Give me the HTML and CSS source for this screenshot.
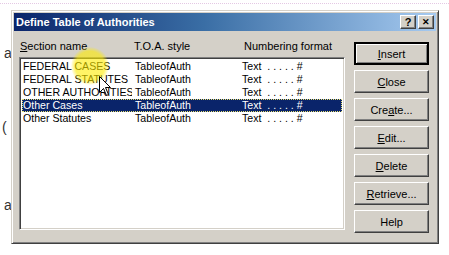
FILE: index.html
```html
<!DOCTYPE html>
<html lang="en">
<head>
    <meta charset="UTF-8">
    <title>Define Table of Authorities</title>
    <link rel="stylesheet" href="styles.css">
</head>
<body>
    <div class="doc-rule"></div>
    <div class="desk">
        <div class="doc-margin">
            <span class="stray first">a</span>
            <span class="stray second">(</span>
            <span class="stray third">a</span>
        </div>
        <div class="dialog">
            <div class="titlebar">
                <span class="title">Define Table of Authorities</span>
                <div class="caption-btns">
                    <span class="cap-btn">?</span>
                    <span class="cap-btn close">&#x2715;</span>
                </div>
            </div>
            <div class="content">
                <div class="list-col">
                    <div class="headers">
                        <span><u>S</u>ection name</span>
                        <span>T.O.A. style</span>
                        <span class="h-num">Numbering format</span>
                    </div>
                    <div class="listbox">
                        <div class="row"><span class="name">FEDERAL CASES</span><span>TableofAuth</span><span class="fmt">Text  . . . . . #</span></div>
                        <div class="row"><span class="name">FEDERAL STATUTES</span><span>TableofAuth</span><span class="fmt">Text  . . . . . #</span></div>
                        <div class="row"><span class="name">OTHER AUTHORITIES</span><span>TableofAuth</span><span class="fmt">Text  . . . . . #</span></div>
                        <div class="row selected"><span class="name">Other Cases</span><span>TableofAuth</span><span class="fmt">Text  . . . . . #</span></div>
                        <div class="row"><span class="name">Other Statutes</span><span>TableofAuth</span><span class="fmt">Text  . . . . . #</span></div>
                    </div>
                </div>
                <div class="btn-col">
                    <button class="default"><u>I</u>nsert</button>
                    <button><u>C</u>lose</button>
                    <button>Cre<u>a</u>te...</button>
                    <button><u>E</u>dit...</button>
                    <button><u>D</u>elete</button>
                    <button><u>R</u>etrieve...</button>
                    <button>Help</button>
                </div>
            </div>
        </div>
    </div>

    <!-- mouse highlight and pointer over the dialog -->
    <div class="spotlight"></div>
    <svg class="pointer" width="13" height="21" viewBox="0 0 13 21">
        <path d="M0.5,0.5 L0.5,16.5 L4.5,12.5 L7.5,19.5 L9.5,18.5 L6.5,11.5 L11.5,11.5 Z" fill="#fff" stroke="#000" stroke-width="1"/>
    </svg>
</body>
</html>
```

FILE: styles.css
```css
body {
    margin: 0;
    background-color: #fff;
    font-family: "Liberation Sans", Arial, sans-serif;
    font-size: 11px;
    color: #000;
    position: relative;
    width: 449px;
    height: 255px;
    overflow: hidden;
}
.doc-rule {
    margin-top: 3px;
    height: 0;
    border-top: 1px dotted #e4c8e4;
}
.desk {
    display: flex;
    margin-top: 6px;
}
.doc-margin {
    width: 11px;
    display: flex;
    flex-direction: column;
    font-size: 14px;
    line-height: 14px;
    color: #333;
}
.stray {
    padding-left: 4px;
}
.stray.first {
    margin-top: 36px;
}
.stray.second {
    margin-top: 60px;
    padding-left: 2px;
}
.stray.third {
    margin-top: 64px;
}
.dialog {
    width: 428px;
    height: 234px;
    box-sizing: border-box;
    background-color: #d4d0c8;
    border: 1px solid;
    border-color: #d4d0c8 #404040 #404040 #d4d0c8;
    box-shadow: inset 1px 1px #fff, inset -1px -1px #808080;
    padding: 2px;
    display: flex;
    flex-direction: column;
}
.titlebar {
    height: 18px;
    background: linear-gradient(to right, #0a246a, #3a6ea5 45%, #a6caf0);
    display: flex;
    align-items: center;
    justify-content: space-between;
    padding-left: 2px;
}
.title {
    color: #fff;
    font-weight: bold;
    font-size: 11px;
}
.caption-btns {
    display: flex;
    gap: 2px;
    margin-right: 2px;
}
.cap-btn {
    width: 16px;
    height: 14px;
    box-sizing: border-box;
    background-color: #d4d0c8;
    border: 1px solid;
    border-color: #fff #404040 #404040 #fff;
    box-shadow: inset -1px -1px #808080;
    font-weight: bold;
    font-size: 11px;
    line-height: 12px;
    text-align: center;
}
.cap-btn.close {
    font-size: 9px;
}
.content {
    display: flex;
    padding-left: 5px;
}
.list-col {
    width: 326px;
}
.headers {
    height: 26px;
    padding-top: 9px;
    box-sizing: border-box;
    line-height: 13px;
    display: grid;
    grid-template-columns: 114px 110px 1fr;
    padding-left: 1px;
}
.listbox {
    height: 173px;
    box-sizing: border-box;
    background-color: #fff;
    border: 1px solid;
    border-color: #808080 #fff #fff #808080;
    box-shadow: inset 1px 1px #404040, inset -1px -1px #d4d0c8;
    padding: 2px 2px 0 2px;
    font-size: 10.6px;
}
.row {
    display: grid;
    grid-template-columns: 112px 107px 1fr;
    height: 13px;
    line-height: 13px;
    padding-left: 1px;
    white-space: pre;
}
.row .name {
    overflow: hidden;
    margin-right: 3px;
}
.row.selected {
    background-color: #0a246a;
    color: #fff;
    outline: 1px dotted #e8e070;
    outline-offset: -1px;
}
.btn-col {
    display: flex;
    flex-direction: column;
    gap: 5px;
    margin-left: 9px;
    padding-top: 11px;
}
button {
    width: 75px;
    height: 23px;
    padding: 0;
    font-family: "Liberation Sans", Arial, sans-serif;
    font-size: 11px;
    color: #000;
    background-color: #d4d0c8;
    border: 1px solid;
    border-color: #fff #404040 #404040 #fff;
    box-shadow: inset -1px -1px #808080;
}
button.default {
    border: 2px solid #000;
    box-shadow: inset 1px 1px #fff, inset -1px -1px #808080;
}
.spotlight {
    position: absolute;
    left: 71px;
    top: 47px;
    width: 38px;
    height: 38px;
    border-radius: 50%;
    background: radial-gradient(circle, rgba(255, 236, 0, 0.6) 55%, rgba(255, 236, 0, 0) 72%);
}
.pointer {
    position: absolute;
    left: 99px;
    top: 76px;
}
```
